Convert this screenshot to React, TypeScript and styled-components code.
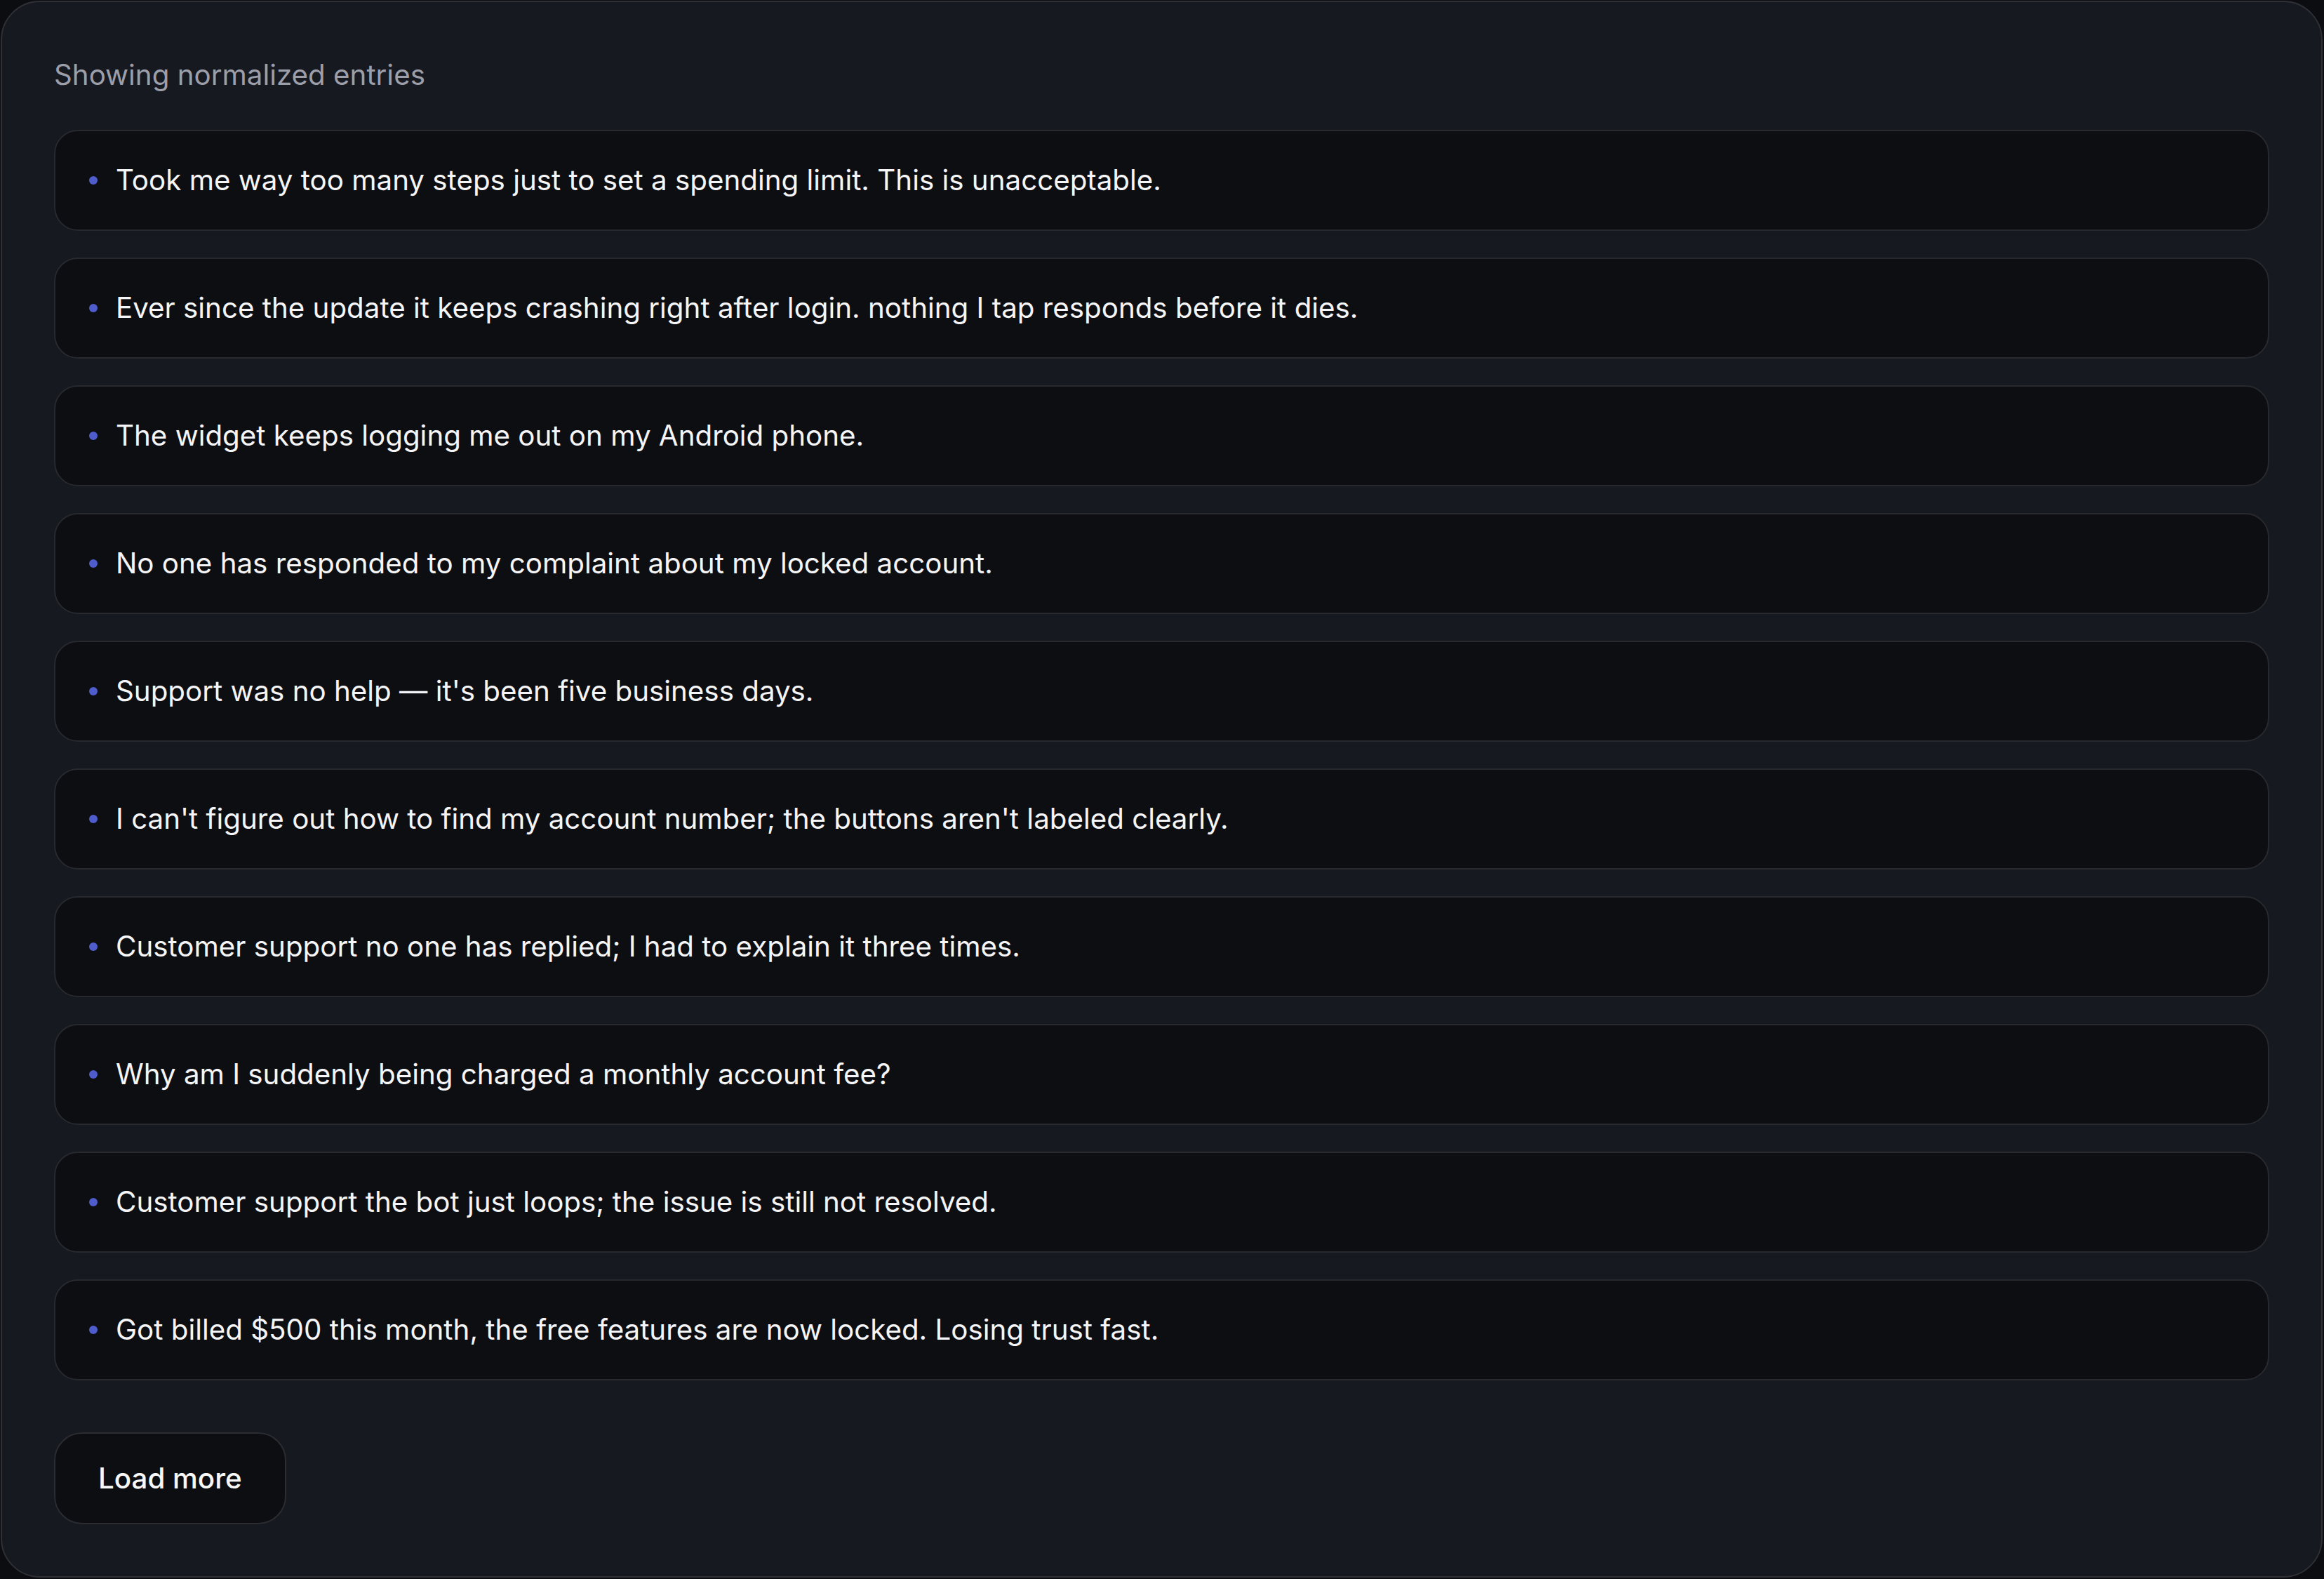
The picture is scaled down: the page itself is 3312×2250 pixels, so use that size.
import styled, { createGlobalStyle } from 'styled-components';

const GlobalStyle = createGlobalStyle`
	html, body {
		margin: 0;
		padding: 0;
		background: #0c0d11;
	}
	body {
		font-family: Inter, "Noto Sans", "Liberation Sans", sans-serif;
		-webkit-font-smoothing: antialiased;
	}
	* {
		box-sizing: border-box;
	}
`;

const Panel = styled.section`
	display: flex;
	flex-direction: column;
	align-items: flex-start;
	width: calc(100% - 3px);
	height: 2247px;
	margin: 1px 2px 0 1px;
	padding: 72px 74px 0 74px;
	background: #161920;
	border: 2px solid #2e3036;
	border-radius: 56px;
	overflow: hidden;
`;

const Caption = styled.p`
	margin: 0;
	font-size: 40.3px;
	line-height: 64px;
	color: #9c9ea9;
	font-weight: 400;
`;

const EntryList = styled.ul`
	display: flex;
	flex-direction: column;
	gap: 38px;
	width: 100%;
	margin: 46px 0 0;
	padding: 0;
	list-style: none;
`;

const Entry = styled.li`
	display: flex;
	align-items: center;
	gap: 26px;
	height: 144px;
	padding: 0 48px;
	background: #0d0e12;
	border: 2px solid #27292f;
	border-radius: 34px;
`;

const Dot = styled.span<{ $color?: string }>`
	flex: none;
	width: 12px;
	height: 12px;
	border-radius: 50%;
	background: ${(p) => p.$color ?? '#4e5ccc'};
`;

const EntryText = styled.span`
	font-size: 40.3px;
	line-height: 1.4;
	color: #f5f5f7;
	white-space: nowrap;
`;

const LoadMore = styled.button`
	margin-top: 74px;
	height: 131px;
	padding: 0 61px;
	background: #0d0e12;
	border: 2px solid #2a2c32;
	border-radius: 40px;
	color: #f7f7f8;
	font-family: inherit;
	font-size: 40.3px;
	font-weight: 500;
	cursor: pointer;
`;

const entries = [
	'Took me way too many steps just to set a spending limit. This is unacceptable.',
	'Ever since the update it keeps crashing right after login. nothing I tap responds before it dies.',
	'The widget keeps logging me out on my Android phone.',
	'No one has responded to my complaint about my locked account.',
	"Support was no help \u2014 it's been five business days.",
	"I can't figure out how to find my account number; the buttons aren't labeled clearly.",
	'Customer support no one has replied; I had to explain it three times.',
	'Why am I suddenly being charged a monthly account fee?',
	'Customer support the bot just loops; the issue is still not resolved.',
	'Got billed $500 this month, the free features are now locked. Losing trust fast.',
];

export default function App() {
	return (
		<>
			<GlobalStyle />
			<Panel>
				<Caption>Showing normalized entries</Caption>
				<EntryList>
					{entries.map((text) => (
						<Entry key={text}>
							<Dot />
							<EntryText>{text}</EntryText>
						</Entry>
					))}
				</EntryList>
				<LoadMore type="button">Load more</LoadMore>
			</Panel>
		</>
	);
}
